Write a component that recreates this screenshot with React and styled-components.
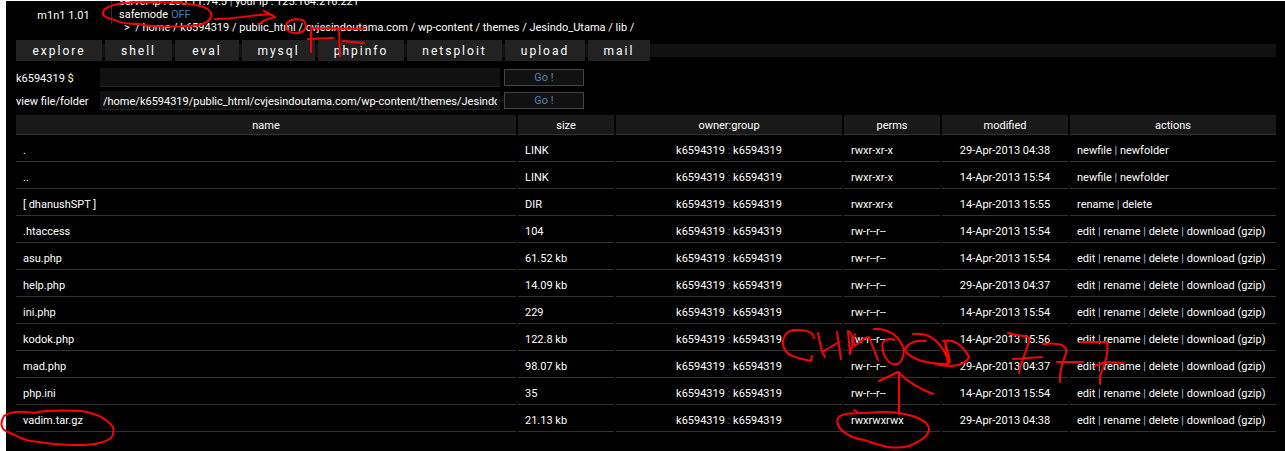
import React, { useState } from 'react'
import styled, { createGlobalStyle } from 'styled-components'

const tabs = [
  { name: 'explore', width: 86 },
  { name: 'shell', width: 67 },
  { name: 'eval', width: 64 },
  { name: 'mysql', width: 73 },
  { name: 'phpinfo', width: 86 },
  { name: 'netsploit', width: 95 },
  { name: 'upload', width: 80 },
  { name: 'mail', width: 62 },
]

const path = ['home', 'k6594319', 'public_html', 'cvjesindoutama.com', 'wp-content', 'themes', 'Jesindo_Utama', 'lib']

const dirActions = ['newfile', 'newfolder']
const fileActions = ['edit', 'rename', 'delete', 'download']

const files = [
  ['.', 'LINK', 'rwxr-xr-x', '29-Apr-2013 04:38', dirActions],
  ['..', 'LINK', 'rwxr-xr-x', '14-Apr-2013 15:54', dirActions],
  ['[ dhanushSPT ]', 'DIR', 'rwxr-xr-x', '14-Apr-2013 15:55', ['rename', 'delete']],
  ['.htaccess', '104', 'rw-r--r--', '14-Apr-2013 15:54', fileActions],
  ['asu.php', '61.52 kb', 'rw-r--r--', '14-Apr-2013 15:54', fileActions],
  ['help.php', '14.09 kb', 'rw-r--r--', '29-Apr-2013 04:37', fileActions],
  ['ini.php', '229', 'rw-r--r--', '14-Apr-2013 15:54', fileActions],
  ['kodok.php', '122.8 kb', 'rw-r--r--', '14-Apr-2013 15:56', fileActions],
  ['mad.php', '98.07 kb', 'rw-r--r--', '29-Apr-2013 04:37', fileActions],
  ['php.ini', '35', 'rw-r--r--', '14-Apr-2013 15:54', fileActions],
  ['vadim.tar.gz', '21.13 kb', 'rwxrwxrwx', '29-Apr-2013 04:38', fileActions],
]

function Actions({ items }) {
  return items.map((item, index) => (
    <React.Fragment key={item}>
      {index > 0 && <Bar> | </Bar>}
      <a href='#'>{item}</a>
      {item === 'download' && <> (<a href='#'>gzip</a>)</>}
    </React.Fragment>
  ))
}

function Marks() {
  return (
    <Pen width='1285' height='451' viewBox='0 0 1285 451' aria-hidden='true'>
      <path d='M175 2L182 2' />
      <path d='M104 10C110 4 124 2 145 2C172 2 196 3 206 8C216 14 211 23 198 25C176 28 144 26 139 24C130 24 120 23 115 20C107 18 100 16 104 10' />
      <path d='M215 19C232 19 248 16 268 14M264 11L275 17C268 19 262 20 260 24' />
      <path d='M288 22C291 19 301 18 304 21C309 28 303 34 294 33C286 32 284 26 288 22' />
      <path d='M311 27L311 52M308 39L333 38M311 28L364 29M339 30L340 56M343 41L364 43' />
      <path d='M814 338C813 331 805 330 794 330C785 331 781 340 784 348C787 355 792 357 811 361L812 356' />
      <path d='M818 333L822 352L825 357M837 332L841 359M822 352L839 342' />
      <path d='M848 331L850 354L855 334M848 331C853 331 853 345 855 346L865 338L869 337L878 360' />
      <path d='M874 329C890 328 900 337 904 350C903 360 900 366 893 364C884 361 880 346 884 341C888 338 893 339 894 340' />
      <path d='M913 334C930 332 942 342 949 363M926 341C912 339 903 347 906 352C914 361 928 364 948 364L945 341L950 362M943 341C956 338 964 348 969 357C966 364 954 369 935 364' />
      <path d='M1008 333C1022 337 1032 335 1029 341C1026 352 1021 362 1019 373M1013 359L1042 357M1043 344C1061 342 1068 346 1066 353C1063 362 1059 370 1060 382M1057 362L1083 362M1080 342L1107 342C1109 354 1105 365 1100 376L1100 384M1095 366L1105 362L1124 363' />
      <path d='M899 414L899 372M879 381L898 372C908 382 920 389 933 394' />
      <path d='M854 410L859 413M838 418C843 411 862 414 880 412C902 411 928 418 929 429C929 437 918 442 909 446C890 451 875 443 864 440C850 438 834 429 838 418' />
      <path d='M4 416C-1 424 2 430 8 432C16 435 22 440 31 441C60 446 88 446 99 443C111 440 115 437 113 427C107 419 95 413 81 411C56 410 42 411 34 413C22 411 11 411 4 416' />
    </Pen>
  )
}

function App() {
  const [command, setCommand] = useState('')
  const [folder, setFolder] = useState('/home/k6594319/public_html/cvjesindoutama.com/wp-content/themes/Jesindo_Utama/lib/')

  return (
    <Page>
      <GlobalStyle />
      <Header>
        <Brand>m1n1 1.01</Brand>
        <Info>
          <div>server ip : 203.11.74.5 <Bar>|</Bar> your ip : 125.164.216.221</div>
          <div>safemode <Off>OFF</Off></div>
        </Info>
        <Crumbs>
          &gt;{'\u00a0 '}/{' '}
          {path.map((dir) => (
            <React.Fragment key={dir}>
              <a href='#'>{dir}</a> /{' '}
            </React.Fragment>
          ))}
        </Crumbs>
      </Header>
      <Menu>
        {tabs.map((tab) => (
          <Tab key={tab.name} href='#' $width={tab.width}>{tab.name}</Tab>
        ))}
      </Menu>
      <CommandForm onSubmit={(e) => e.preventDefault()}>
        <label htmlFor='command'>k6594319 <Dollar>$</Dollar></label>
        <TextBox id='command' value={command} onChange={(e) => setCommand(e.target.value)} />
        <GoButton>Go !</GoButton>
      </CommandForm>
      <CommandForm onSubmit={(e) => e.preventDefault()}>
        <label htmlFor='folder'>view file/folder</label>
        <TextBox id='folder' value={folder} onChange={(e) => setFolder(e.target.value)} />
        <GoButton>Go !</GoButton>
      </CommandForm>
      <FileTable>
        <thead>
          <tr>
            <Head>name</Head>
            <Head $width={96}>size</Head>
            <Head $width={226}>owner:group</Head>
            <Head $width={96}>perms</Head>
            <Head $width={126}>modified</Head>
            <Head $width={206}>actions</Head>
          </tr>
        </thead>
        <tbody>
          {files.map(([name, size, perms, modified, actions]) => (
            <tr key={name}>
              <Cell><a href='#'>{name}</a></Cell>
              <Cell>{size}</Cell>
              <Cell $center>k6594319 <Off>:</Off> k6594319</Cell>
              <Cell>{perms}</Cell>
              <Cell $center>{modified}</Cell>
              <Cell><Actions items={actions} /></Cell>
            </tr>
          ))}
        </tbody>
      </FileTable>
      <Marks />
    </Page>
  )
}

export default App

const GlobalStyle = createGlobalStyle`
  *{
    box-sizing:border-box;
  }
  body{
    margin:0;
    background:#fff;
    color:#fff;
    font-family:Roboto, sans-serif;
    font-size:11px;
    line-height:14px;
  }
  a{
    color:inherit;
    text-decoration:none;
  }
  input, button{
    font:inherit;
  }
`

const Page = styled.div`
  position:relative;
  min-height:calc(100vh - 1px);
  margin:1px 0 0 6px;
  padding:0 9px 0 10px;
  background:#000;
`

const Header = styled.header`
  display:grid;
  grid-template-columns:96px 1fr;
  height:39px;
  align-content:start;
`

const Brand = styled.div`
  height:23px;
  padding-top:8px;
  text-align:center;
  border-right:1px solid #333;
`

const Info = styled.div`
  display:flex;
  flex-direction:column;
  justify-content:flex-end;
  height:20px;
  padding-left:7px;
  line-height:13px;
  overflow:hidden;
`

const Off = styled.span`
  color:#4682b4;
`

const Bar = styled.span`
  color:#9cc8f0;
`

const Dollar = styled.span`
  color:#ffffcc;
`

const Crumbs = styled.nav`
  grid-column:2;
  height:14px;
  margin-top:-3px;
  padding-left:12px;
`

const Menu = styled.nav`
  display:flex;
  gap:3px;
  height:21px;
  background:linear-gradient(#111, #111) 0 4px / 100% 13px no-repeat;
`

const Tab = styled.a`
  width:${props=>props.$width}px;
  padding-top:1px;
  background:#222;
  font-size:12px;
  line-height:20px;
  letter-spacing:2px;
  text-align:center;
`

const CommandForm = styled.form`
  display:grid;
  grid-template-columns:84px 400px 80px;
  align-items:center;
  height:19px;
  margin-top:4px;

  ${Menu} + &{
    margin-top:7px;
  }

  label{
    padding-top:2px;
  }
`

const TextBox = styled.input`
  height:19px;
  padding:2px 3px 0;
  color:#fff;
  background:#111;
  border:0;
  border-bottom:1px solid #222;
  outline:none;
`

const GoButton = styled.button`
  height:17px;
  margin-left:4px;
  width:80px;
  padding:1px 0 0;
  line-height:14px;
  color:#4682b4;
  background:#111;
  border:1px solid #444;
  cursor:pointer;
`

const FileTable = styled.table`
  width:calc(100% + 4px);
  margin:3px -2px 0;
  table-layout:fixed;
  border-spacing:2px;
`

const Head = styled.th`
  width:${props=>props.$width ? props.$width + 'px' : 'auto'};
  height:20px;
  padding:2px 0 0;
  font-weight:400;
  background:#191919;
  border-bottom:1px solid #333;
`

const Cell = styled.td`
  height:25px;
  padding:3px 7px 0;
  text-align:${props=>props.$center ? 'center' : 'left'};
  white-space:nowrap;
  border-bottom:1px solid #333;
`

const Pen = styled.svg`
  position:absolute;
  top:-1px;
  left:-6px;
  pointer-events:none;
  fill:none;
  stroke:#f00;
  stroke-width:2;
  stroke-linecap:round;
  stroke-linejoin:round;
`
